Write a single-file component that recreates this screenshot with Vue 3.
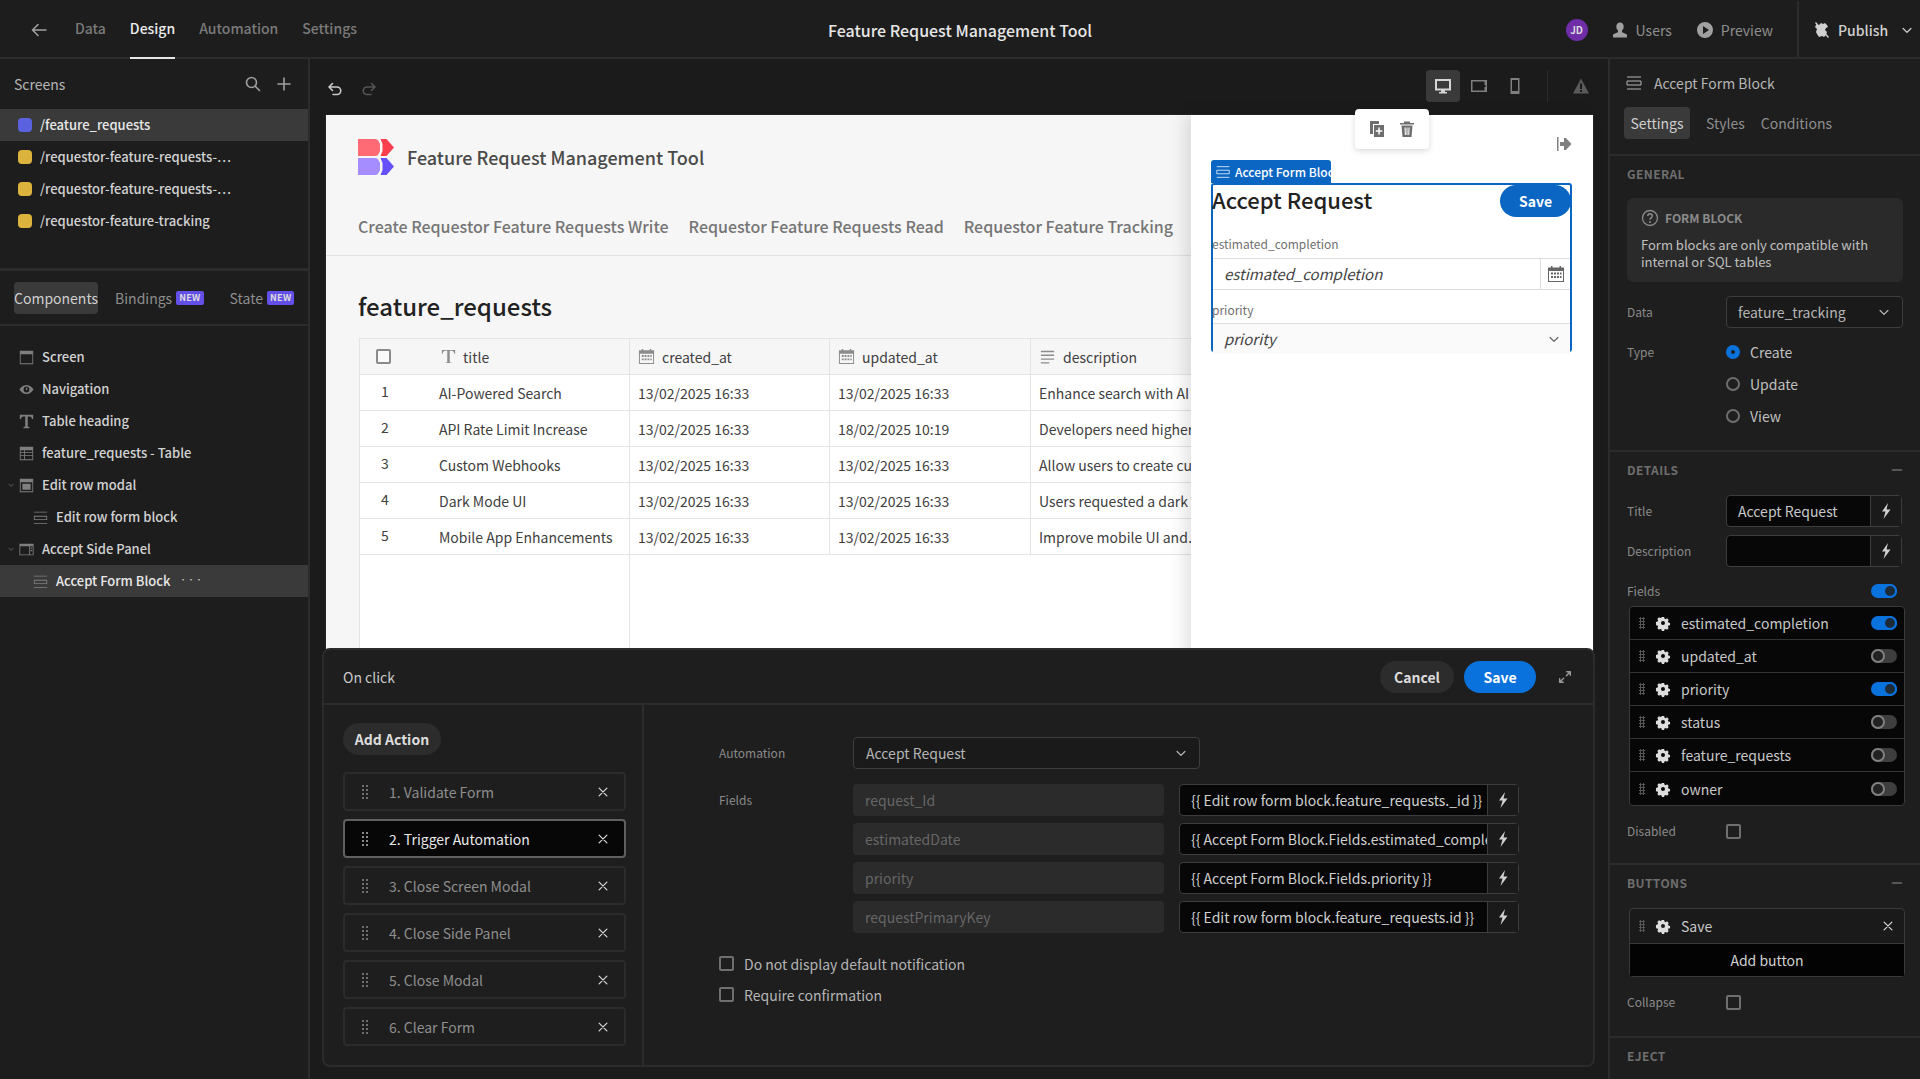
<script setup>
const ic = {
  back: 'M16 9H2.5M8 3.5L2.5 9 8 14.5',
  search: 'M7.5 2.5a5 5 0 1 0 0 10 5 5 0 0 0 0-10zM11.2 11.2L15.5 15.5',
  plus: 'M9 3v12M3 9h12',
  undo: 'M6.5 3.5L3 7l3.5 3.5M3.5 7H11a3.7 3.7 0 0 1 0 7.5H7',
  redo: 'M11.500 3.500L15 7l-3.500 3.500M14.500 7H7a3.700 3.700 0 0 0 0 7.500H11',
  close: 'M4 4l10 10M14 4L4 14',
  chev: 'M4 7l5 5 5-5',
  minus: 'M3 9h12',
  form: 'M2 3h14M2 7h14v4H2zM2 15h14',
  expand: 'M11 3h4v4M15 3l-4.500 4.500M7 15H3v-4M3 15l4.500-4.500'
}
const screens = [
  { t: '/feature_requests', c: '#5b62e0', active: true },
  { t: '/requestor-feature-requests-…', c: '#dcb33c' },
  { t: '/requestor-feature-requests-…', c: '#dcb33c' },
  { t: '/requestor-feature-tracking', c: '#dcb33c' }
]
const tree = [
  { t: 'Screen', i: 'screen' },
  { t: 'Navigation', i: 'nav' },
  { t: 'Table heading', i: 'text' },
  { t: 'feature_requests - Table', i: 'table' },
  { t: 'Edit row modal', i: 'modal', open: true },
  { t: 'Edit row form block', i: 'form', sub: true },
  { t: 'Accept Side Panel', i: 'side', open: true },
  { t: 'Accept Form Block', i: 'form', sub: true, active: true }
]
const rows = [
  ['1', 'AI-Powered Search', '13/02/2025 16:33', '13/02/2025 16:33', 'Enhance search with AI for better results across the app'],
  ['2', 'API Rate Limit Increase', '13/02/2025 16:33', '18/02/2025 10:19', 'Developers need higher rate limits for their apps'],
  ['3', 'Custom Webhooks', '13/02/2025 16:33', '13/02/2025 16:33', 'Allow users to create custom webhooks for events'],
  ['4', 'Dark Mode UI', '13/02/2025 16:33', '13/02/2025 16:33', 'Users requested a dark theme for the interface'],
  ['5', 'Mobile App Enhancements', '13/02/2025 16:33', '13/02/2025 16:33', 'Improve mobile UI and…']
]
const actions = ['1. Validate Form', '2. Trigger Automation', '3. Close Screen Modal', '4. Close Side Panel', '5. Close Modal', '6. Clear Form']
const params = [
  ['request_Id', '{{ Edit row form block.feature_requests._id }}'],
  ['estimatedDate', '{{ Accept Form Block.Fields.estimated_comple…'],
  ['priority', '{{ Accept Form Block.Fields.priority }}'],
  ['requestPrimaryKey', '{{ Edit row form block.feature_requests.id }}']
]
const fields = [
  ['estimated_completion', true], ['updated_at', false], ['priority', true],
  ['status', false], ['feature_requests', false], ['owner', false]
]
</script>

<template>
  <div class="app">
    <header class="topbar">
      <div class="top-left">
        <svg class="i18 back" viewBox="0 0 18 18"><path :d="ic.back" class="st" /></svg>
        <a class="tab">Data</a>
        <a class="tab on">Design</a>
        <a class="tab">Automation</a>
        <a class="tab">Settings</a>
      </div>
      <div class="app-title">Feature Request Management Tool</div>
      <div class="top-right">
        <span class="avatar">JD</span>
        <span class="top-act">
          <svg class="i18" viewBox="0 0 18 18"><path fill="currentColor" d="M9 1.500c2.300 0 3.700 1.800 3.700 4 0 1.800-.8 3.300-1.700 4.100v1.400c0 .5 3.600 1.500 5 2.500v3H2v-3c1.400-1 5-2 5-2.500V9.600C6.100 8.800 5.300 7.300 5.300 5.500c0-2.200 1.400-4 3.700-4z" /></svg>
          Users
        </span>
        <span class="top-act">
          <svg class="i18" viewBox="0 0 18 18"><path fill="currentColor" fill-rule="evenodd" d="M9 1a8 8 0 1 0 0 16A8 8 0 0 0 9 1zM7 5l6 4-6 4z" /></svg>
          Preview
        </span>
        <span class="publish">
          <svg class="i18" viewBox="0 0 18 18"><path fill="currentColor" d="M4 3l2 1 2-2 2 1 2-1 2 2 1 2-2 1-1 2 2 2-1 3-2 2-2-1-3 1-2-3-1-2 1-3-2-2 1-2zM3 1l13 15-1 1L2 2z" /></svg>
          Publish
          <svg class="i14" viewBox="0 0 18 18"><path :d="ic.chev" class="st" /></svg>
        </span>
      </div>
    </header>

    <div class="main">
      <aside class="sidebar">
        <div class="screens">
          <div class="sc-head">
            <span>Screens</span>
            <span class="sc-tools">
              <svg class="i18" viewBox="0 0 18 18"><path :d="ic.search" class="st" /></svg>
              <svg class="i18" viewBox="0 0 18 18"><path :d="ic.plus" class="st" /></svg>
            </span>
          </div>
          <div v-for="(s, n) in screens" :key="n" class="sc-row" :class="{ active: s.active }">
            <i class="dot" :style="{ background: s.c }"></i>{{ s.t }}
          </div>
        </div>
        <div class="left-tabs">
          <span class="ltab on">Components</span>
          <span class="ltab">Bindings<b class="new">NEW</b></span>
          <span class="ltab st-tab">State<b class="new">NEW</b></span>
        </div>
        <div class="tree">
          <div v-for="r in tree" :key="r.t" class="t-row" :class="{ sub: r.sub, active: r.active }">
            <svg v-if="r.open" class="t-chev" viewBox="0 0 18 18"><path :d="ic.chev" class="st" /></svg>
            <svg class="t-ic" viewBox="0 0 18 18" fill="#7f7f7f">
              <path v-if="r.i === 'screen'" fill-rule="evenodd" d="M1 1h16v16H1zM2 5v11h14V5z" />
              <path v-else-if="r.i === 'nav'" fill-rule="evenodd" d="M9 3.500c4 0 7 3 8.500 5.500-1.500 2.500-4.500 5.500-8.500 5.500S2 11.500.5 9C2 6.500 5 3.500 9 3.500zM9 5.500a3.500 3.500 0 1 0 0 7 3.500 3.500 0 0 0 0-7zM8.500 7H10v2.500H8.500z" />
              <path v-else-if="r.i === 'text'" d="M1 1h16v5h-1.500c0-2-1-3-3-3H10.500v12l2 .5V17h-7v-1.500l2-.5V3H5.500c-2 0-3 1-3 3H1z" />
              <path v-else-if="r.i === 'table'" fill-rule="evenodd" d="M1 1h16v16H1zM2 5v2.500h4V5zm5 0v2.500h9V5zM2 8.500V11h4V8.500zm5 0V11h9V8.500zM2 12v4h4v-4zm5 0v4h9v-4z" />
              <path v-else-if="r.i === 'modal'" fill-rule="evenodd" d="M1 1h16v16H1zM2 5v11h14V5zM4 7h10v7H4z" />
              <path v-else-if="r.i === 'side'" fill-rule="evenodd" d="M.5 2h17v14H.5zM1.500 5v10H12V5zM13 5v10h3.500V5zm.8 1.500h2v1.500h-2zm0 3h2V11h-2z" />
              <path v-else fill-rule="evenodd" d="M1 2h16v1H1zM1 7h16v5H1zm1 1v3h14V8zM1 15.500h16v1H1z" />
            </svg>
            <span>{{ r.t }}</span>
            <span v-if="r.active" class="more">•••</span>
          </div>
        </div>
      </aside>

      <section class="center">
        <div class="tools">
          <span class="undo">
            <svg class="i18" viewBox="0 0 18 18"><path :d="ic.undo" class="st" /></svg>
            <svg class="i18 dim" viewBox="0 0 18 18"><path :d="ic.redo" class="st" /></svg>
          </span>
          <span class="devices">
            <span class="dev on"><svg class="i18" viewBox="0 0 18 18"><path fill="currentColor" fill-rule="evenodd" d="M1 2h16v11.500H11V15h2v1.500H5V15h2v-1.500H1zM3 4v7.500h12V4z" /></svg></span>
            <span class="dev"><svg class="i18" viewBox="0 0 18 18"><path fill="currentColor" fill-rule="evenodd" d="M1 3h16v12H1zM2.500 4.500v9h12v-3.500h1.200V8h-1.200V4.500z" /></svg></span>
            <span class="dev"><svg class="i18" viewBox="0 0 18 18"><path fill="currentColor" fill-rule="evenodd" d="M4.500 1h9v16h-9zM6 3v11h6V3z" /></svg></span>
            <i class="vsep"></i>
            <svg class="i18 warn" viewBox="0 0 18 18"><path fill="#5a5a5a" fill-rule="evenodd" d="M9 1.500l8 15H1zM8 6.500v5.500h2V6.500zM8 13v2h2v-2z" /></svg>
          </span>
        </div>

        <div class="preview">
          <div class="page">
            <div class="pg-head">
              <svg class="logo" viewBox="0 0 36 36">
                <path fill="#ff6b74" d="M0 0h17c2 0 3 1 3.500 2l1.500 3v7l-1.500 3c-.5 1-1.500 2-3.500 2H0z" />
                <path fill="#fb3f4f" d="M22.500 0h6l7.500 8.500L28.500 17h-6l2-5V5z" />
                <path fill="#a58cff" d="M0 19h17c2 0 3 1 3.500 2l1.500 3v7l-1.500 3c-.5 1-1.500 2-3.500 2H0z" />
                <path fill="#6650fb" d="M22.500 19h6l7.500 8.500L28.500 36h-6l2-5v-7z" />
              </svg>
              <span class="pg-name">Feature Request Management Tool</span>
            </div>
            <nav class="pg-nav">
              <span>Create Requestor Feature Requests Write</span>
              <span>Requestor Feature Requests Read</span>
              <span>Requestor Feature Tracking</span>
              <span>Feature_requests</span>
            </nav>
            <div class="pg-body">
              <h2 class="pg-title">feature_requests</h2>
              <div class="tbl">
                <div class="th">
                  <div class="c0 first"><i class="cb light"></i><span class="h-t"><svg class="i18 th-ic" viewBox="0 0 18 18"><path fill="#8c8c8c" d="M2 2h14v4h-1c0-1.500-.8-3-2.500-3h-2.200v12l2 .5V16H5.700v-.5l2-.5V3H5.500C3.800 3 3 4.500 3 6H2z" /></svg>title</span></div>
                  <div class="c1"><svg class="i18 th-ic" viewBox="0 0 18 18"><path fill="#8c8c8c" fill-rule="evenodd" d="M1 2.500h3V1h1.500v1.500h7V1H14v1.500h3V17H1zM2 6v10h14V6zm2 1.500h2v2H4zm3 0h2v2H7zm3 0h2v2h-2zm3 0h1.500v2H13zM4 11h2v2H4zm3 0h2v2H7zm3 0h2v2h-2zm3 0h1.500v2H13z" /></svg>created_at</div>
                  <div class="c2"><svg class="i18 th-ic" viewBox="0 0 18 18"><path fill="#8c8c8c" fill-rule="evenodd" d="M1 2.500h3V1h1.500v1.500h7V1H14v1.500h3V17H1zM2 6v10h14V6zm2 1.500h2v2H4zm3 0h2v2H7zm3 0h2v2h-2zm3 0h1.500v2H13zM4 11h2v2H4zm3 0h2v2H7zm3 0h2v2h-2zm3 0h1.500v2H13z" /></svg>updated_at</div>
                  <div class="c3"><svg class="i18 th-ic" viewBox="0 0 18 18"><path fill="#8c8c8c" d="M2 3h14v1.500H2zM2 7h14v1.500H2zM2 11h14v1.500H2zM2 15h9v1.500H2z" /></svg>description</div>
                </div>
                <div v-for="r in rows" :key="r[0]" class="tr">
                  <div class="c0 first"><span class="num">{{ r[0] }}</span><span class="ttl">{{ r[1] }}</span></div>
                  <div class="c1">{{ r[2] }}</div>
                  <div class="c2">{{ r[3] }}</div>
                  <div class="c3">{{ r[4] }}</div>
                </div>
                <div class="tfill"><div class="first c0"></div></div>
              </div>
            </div>
          </div>

          <div class="side-panel">
            <svg class="i18 collapse" viewBox="0 0 18 18"><path fill="#808080" d="M2 2h1.500v14H2zM9 3h2l5.500 6-5.500 6H9v-4H5V7h4z" /></svg>
            <div class="fb">
              <span class="fb-tag"><svg class="i18" viewBox="0 0 18 18"><path fill="none" stroke="#fff" stroke-opacity=".85" :d="ic.form" /></svg>Accept Form Block</span>
              <div class="fb-head">
                <span class="fb-title">Accept Request</span>
                <span class="fb-save">Save</span>
              </div>
              <label class="fb-lbl">estimated_completion</label>
              <div class="fb-input">
                <em>estimated_completion</em>
                <span class="fb-cal"><svg class="i18" viewBox="0 0 18 18"><path fill="#666" fill-rule="evenodd" d="M1 2.500h3V1h1.500v1.500h7V1H14v1.500h3V17H1zM2 6v10h14V6zm2 1.500h2v2H4zm3 0h2v2H7zm3 0h2v2h-2zm3 0h1.500v2H13zM4 11h2v2H4zm3 0h2v2H7zm3 0h2v2h-2zm3 0h1.500v2H13z" /></svg></span>
              </div>
              <label class="fb-lbl second">priority</label>
              <div class="fb-input sel">
                <em>priority</em>
                <svg class="i14 fb-ch" viewBox="0 0 18 18"><path :d="ic.chev" class="st" /></svg>
              </div>
            </div>
          </div>

          <div class="float">
            <svg class="i18" viewBox="0 0 18 18"><path fill="#6e6e6e" d="M2 1h9v3H5v10H2zM6 5h10v12H6zM10.300 7.500v2.800H7.800v1.500h2.500v2.700h1.500v-2.700h2.500v-1.500h-2.500V7.500z" fill-rule="evenodd" /></svg>
            <svg class="i18" viewBox="0 0 18 18"><path fill="#6e6e6e" d="M6 1.500h6V3h4v1.500H2V3h4zM3.500 5.500h11L13.500 17h-9zM6.500 7.500l.4 7.500h1l-.3-7.500zm2 0V15h1V7.500zm2 0l-.3 7.500h1l.4-7.500z" fill-rule="evenodd" /></svg>
          </div>
        </div>

        <div class="action-panel">
          <div class="ap-head">
            <span>On click</span>
            <span class="ap-btns">
              <span class="btn cancel">Cancel</span>
              <span class="btn save">Save</span>
              <svg class="i14 exp" viewBox="0 0 18 18"><path :d="ic.expand" class="st" /></svg>
            </span>
          </div>
          <div class="ap-body">
            <div class="ap-left">
              <span class="add-action">Add Action</span>
              <div class="act-list">
                <div v-for="(a, n) in actions" :key="a" class="act" :class="{ sel: n === 1 }">
                  <i class="grip"></i>
                  <span class="act-t">{{ a }}</span>
                  <svg class="i14 x" viewBox="0 0 18 18"><path :d="ic.close" class="st" /></svg>
                </div>
              </div>
            </div>
            <div class="ap-right">
              <div class="auto-row">
                <span class="ar-lbl">Automation</span>
                <span class="auto-sel">Accept Request<svg class="i14" viewBox="0 0 18 18"><path :d="ic.chev" class="st" /></svg></span>
              </div>
              <div class="f-rows">
                <span class="ar-lbl f-lbl">Fields</span>
                <div class="f-col">
                  <div v-for="p in params" :key="p[0]" class="f-row">
                    <span class="f-name">{{ p[0] }}</span>
                    <span class="f-bind">
                      <span class="f-val">{{ p[1] }}</span>
                      <span class="bolt"><svg class="i18" viewBox="0 0 18 18"><path fill="#d0d0d0" d="M11 1L5 9.500h3.500L6.500 17l7-9.500H9.500z" /></svg></span>
                    </span>
                  </div>
                </div>
              </div>
              <label class="chk"><i class="cb"></i>Do not display default notification</label>
              <label class="chk"><i class="cb"></i>Require confirmation</label>
            </div>
          </div>
        </div>
      </section>

      <aside class="right">
        <div class="r-head">
          <div class="r-title">
            <svg class="i18" viewBox="0 0 18 18"><path fill="none" stroke="#b5b5b5" :d="ic.form" /></svg>
            Accept Form Block
          </div>
          <div class="r-tabs">
            <span class="rt on">Settings</span><span class="rt">Styles</span><span class="rt">Conditions</span>
          </div>
        </div>
        <div class="sect general">
          <div class="s-lbl">GENERAL</div>
          <div class="info">
            <div class="info-t">
              <svg class="i18" viewBox="0 0 18 18"><circle cx="9" cy="9" r="7.500" fill="none" stroke="#8a8a8a" stroke-width="1.300" /><path fill="none" stroke="#8a8a8a" stroke-width="1.500" d="M6.800 7c0-3 4.400-3 4.400 0 0 2-2.200 1.800-2.200 3.800" /><circle cx="9" cy="13" r="1" fill="#8a8a8a" /></svg>
              FORM BLOCK
            </div>
            <div class="info-b">Form blocks are only compatible with internal or SQL tables</div>
          </div>
          <div class="prop">
            <span class="p-lbl">Data</span>
            <span class="r-sel">feature_tracking<svg class="i14" viewBox="0 0 18 18"><path :d="ic.chev" class="st" /></svg></span>
          </div>
          <div class="prop radio-p">
            <span class="p-lbl">Type</span>
            <span class="radio"><i class="rd on"></i>Create</span>
          </div>
          <div class="prop radio-p"><span class="p-lbl"></span><span class="radio"><i class="rd"></i>Update</span></div>
          <div class="prop radio-p"><span class="p-lbl"></span><span class="radio"><i class="rd"></i>View</span></div>
        </div>
        <div class="sect details">
          <div class="s-lbl row"><span>DETAILS</span><svg class="i14 min" viewBox="0 0 18 18"><path :d="ic.minus" class="st" /></svg></div>
          <div class="prop">
            <span class="p-lbl">Title</span>
            <span class="r-inp"><span class="r-val">Accept Request</span><span class="bolt r"><svg class="i18" viewBox="0 0 18 18"><path fill="#d0d0d0" d="M11 1L5 9.500h3.500L6.500 17l7-9.500H9.500z" /></svg></span></span>
          </div>
          <div class="prop">
            <span class="p-lbl">Description</span>
            <span class="r-inp"><span class="r-val"></span><span class="bolt r"><svg class="i18" viewBox="0 0 18 18"><path fill="#d0d0d0" d="M11 1L5 9.500h3.500L6.500 17l7-9.500H9.500z" /></svg></span></span>
          </div>
          <div class="fields-h"><span class="p-lbl">Fields</span><i class="tog on"></i></div>
          <div class="f-list">
            <div v-for="f in fields" :key="f[0]" class="fl-row">
              <i class="grip small"></i>
              <svg class="i18 gear" viewBox="0 0 18 18"><path fill="#ddd" fill-rule="evenodd" d="M7.600 1.500h2.800l.4 2 1.500.7 1.800-1 2 2-1 1.800.7 1.500 2 .4v2.800l-2 .4-.7 1.500 1 1.800-2 2-1.800-1-1.500.7-.4 2H7.600l-.4-2-1.500-.7-1.800 1-2-2 1-1.800-.7-1.500-2-.4V7.600l2-.4.700-1.500-1-1.800 2-2 1.800 1 1.500-.7zM9 6.500a2.500 2.500 0 1 0 0 5 2.500 2.500 0 0 0 0-5z" transform="translate(1.800 1.800) scale(.8)" /></svg>
              <span class="fl-t">{{ f[0] }}</span>
              <i class="tog" :class="{ on: f[1] }"></i>
            </div>
          </div>
          <div class="prop chk-p"><span class="p-lbl">Disabled</span><i class="cb"></i></div>
        </div>
        <div class="sect buttons">
          <div class="s-lbl row"><span>BUTTONS</span><svg class="i14 min" viewBox="0 0 18 18"><path :d="ic.minus" class="st" /></svg></div>
          <div class="f-list">
            <div class="fl-row save-row">
              <i class="grip small"></i>
              <svg class="i18 gear" viewBox="0 0 18 18"><path fill="#ddd" fill-rule="evenodd" d="M7.600 1.500h2.800l.4 2 1.500.7 1.800-1 2 2-1 1.800.7 1.500 2 .4v2.800l-2 .4-.7 1.500 1 1.800-2 2-1.800-1-1.500.7-.4 2H7.600l-.4-2-1.500-.7-1.800 1-2-2 1-1.800-.7-1.500-2-.4V7.600l2-.4.700-1.500-1-1.800 2-2 1.800 1 1.500-.7zM9 6.500a2.500 2.500 0 1 0 0 5 2.500 2.500 0 0 0 0-5z" transform="translate(1.800 1.800) scale(.8)" /></svg>
              <span class="fl-t">Save</span>
              <svg class="i14 x2" viewBox="0 0 18 18"><path :d="ic.close" class="st" /></svg>
            </div>
            <div class="add-btn">Add button</div>
          </div>
          <div class="prop chk-p"><span class="p-lbl">Collapse</span><i class="cb"></i></div>
        </div>
        <div class="sect eject"><div class="s-lbl">EJECT</div></div>
      </aside>
    </div>
  </div>
</template>

<style>
html, body { margin: 0; background: #1a1a1a; }
</style>

<style scoped>
.app {
  width: 1920px; height: 1079px; overflow: hidden; display: flex; flex-direction: column;
  background: #1b1b1b; color: #c8c8c8;
  font-family: "Noto Sans CJK SC", "Noto Sans", sans-serif; font-size: 14px; line-height: 18px;
}
.st { fill: none; stroke: currentColor; stroke-width: 1.600; stroke-linecap: round; stroke-linejoin: round; }
.i18 { width: 18px; height: 18px; flex: none; display: block; }
.i14 { width: 14px; height: 14px; flex: none; display: block; }

.topbar {
  height: 57px; flex: none; border-bottom: 2px solid #2c2c2c; background: #1d1d1d;
  display: grid; grid-template-columns: 1fr auto 1fr; align-items: center;
}
.top-left { display: flex; align-items: center; padding-left: 30px; color: #8e8e8e; height: 59px; }
.back { color: #a0a0a0; margin-right: 27px; }
.tab { font-weight: 500; color: #7a7a7a; height: 57px; line-height: 57px; margin-right: 24px; border-bottom: 2px solid transparent; box-sizing: content-box; }
.tab.on { color: #ececec; border-bottom-color: #e6e6e6; }
.app-title { font-size: 16px; font-weight: 500; color: #e6e6e6; }
.top-right { display: flex; align-items: center; justify-content: flex-end; height: 57px; }
.avatar { width: 22px; height: 22px; border-radius: 50%; background: #6f2da8; color: #ddd; font-size: 10px; font-weight: 700; display: flex; align-items: center; justify-content: center; margin-right: 23px; }
.top-act { display: flex; align-items: center; gap: 7px; color: #8e8e8e; margin-right: 24px; }
.top-act svg { color: #a0a0a0; }
.publish { display: flex; align-items: center; gap: 7px; height: 57px; padding: 0 16px 0 14px; border-left: 2px solid #2c2c2c; color: #d0d0d0; font-weight: 500; width: 123px; box-sizing: border-box; }
.publish .i14 { margin-left: 5px; }

.main { flex: 1; display: flex; min-height: 0; }

.sidebar { width: 308px; flex: none; border-right: 2px solid #2c2c2c; background: #1d1d1d; }
.screens { height: 209px; border-bottom: 3px solid #2c2c2c; box-sizing: content-box; }
.sc-head { display: flex; justify-content: space-between; align-items: center; height: 50px; padding: 0 15px 0 14px; color: #b5b5b5; }
.sc-tools { display: flex; gap: 13px; color: #a0a0a0; }
.sc-row { height: 32px; display: flex; align-items: center; padding-left: 18px; font-size: 13px; font-weight: 500; color: #d2d2d2; }
.sc-row.active { background: #3a3a3a; color: #e8e8e8; }
.dot { width: 14px; height: 14px; border-radius: 4px; margin-right: 8px; flex: none; }
.left-tabs { height: 53px; border-bottom: 2px solid #2c2c2c; display: flex; align-items: center; padding-left: 14px; color: #8e8e8e; }
.ltab { height: 32px; display: flex; align-items: center; padding: 0 9px; border-radius: 4px; margin-right: 8px; }
.ltab.on { background: #3a3a3a; color: #cfcfcf; width: 93px; box-sizing: border-box; padding: 0; justify-content: center; margin-right: 8px; }
.st-tab { margin-left: 0; }
.new { background: #6350e8; color: #ddd; font-size: 9px; font-weight: 700; letter-spacing: .3px; line-height: 14px; padding: 0 3px; border-radius: 2px; margin-left: 4px; }
.tree { padding-top: 15px; }
.t-row { height: 32px; display: flex; align-items: center; padding-left: 19px; font-size: 13px; font-weight: 500; color: #d2d2d2; position: relative; }
.t-row.sub { padding-left: 33px; }
.t-row.active { background: #3a3a3a; color: #e8e8e8; }
.t-ic { width: 15px; height: 15px; flex: none; margin-right: 8px; }
.t-chev { position: absolute; left: 7px; top: 12px; width: 8px; height: 8px; color: #777; }
.more { font-size: 7px; letter-spacing: 1px; margin-left: 9px; color: #ccc; margin-top: -4px; }

.center { flex: 1; position: relative; min-width: 0; background: #1b1b1b; }
.tools { height: 56px; display: flex; align-items: center; justify-content: space-between; padding: 0 18px 0 16px; }
.undo { display: flex; gap: 16px; color: #c8c8c8; padding-top: 3px; }
.undo .dim { color: #555; }
.devices { display: flex; align-items: center; gap: 2px; color: #7f7f7f; margin-top: -3px; }
.dev { width: 34px; height: 32px; display: flex; align-items: center; justify-content: center; border-radius: 4px; }
.dev.on { background: #3a3a3a; color: #d5d5d5; }
.vsep { width: 1px; height: 32px; background: #2c2c2c; margin: 0 22px 0 13px; }
.warn { margin-right: 0; }

.preview { position: relative; margin-left: 16px; width: 1267px; height: 545px; background: #f6f6f6; box-shadow: 0 0 0 1px #252525; overflow: visible; }
.page { width: 100%; height: 100%; overflow: hidden; color: #404040; }
.pg-head { height: 84px; padding-left: 32px; display: flex; align-items: center; gap: 13px; padding-top: 0; box-sizing: border-box; }
.logo { width: 36px; height: 36px; }
.pg-name { font-size: 18px; font-weight: 500; color: #4a4a4a; }
.pg-nav { height: 56px; border-bottom: 1px solid #e2e2e2; display: flex; gap: 20px; padding-left: 32px; align-items: flex-start; padding-top: 18px; box-sizing: content-box; height: 38px; font-size: 16px; font-weight: 500; color: #757575; white-space: nowrap; }
.pg-body { padding: 0 0 0 33px; }
.pg-title { margin: 34px 0 0 -1px; height: 32px; font-size: 24px; line-height: 32px; font-weight: 500; color: #222; }
.tbl { margin-top: 16px; width: 1200px; border-top: 1px solid #e4e4e4; font-size: 14px; }
.th, .tr { display: flex; height: 35px; border-bottom: 1px solid #e4e4e4; background: #fff; }
.th { background: #f6f6f6; }
.c0 { width: 271px; display: flex; align-items: center; flex: none; box-sizing: border-box; }
.first { border-left: 1px solid #e4e4e4; border-right: 1px solid #e4e4e4; }
.c1, .c2, .c3 { display: flex; align-items: center; flex: none; white-space: nowrap; box-sizing: border-box; padding-left: 8px; border-right: 1px solid #e4e4e4; }
.c1 { width: 200px; }
.c2 { width: 201px; }
.c3 { width: 528px; border-right: 0; }
.th-ic { width: 17px; height: 17px; margin-right: 7px; }
.cb { width: 14px; height: 14px; flex: none; display: block; border: 2px solid #6f6f6f; border-radius: 2px; box-sizing: content-box; width: 11px; height: 11px; }
.cb.light { border-color: #8a8a8a; margin-left: 16px; margin-right: 49px; width: 11px; height: 11px; background: #fafafa; }
.h-t { display: flex; align-items: center; }
.h-t .th-ic { margin-right: 6px; }
.num { width: 79px; padding-left: 21px; box-sizing: border-box; margin-top: -4px; flex: none; }
.tfill { height: 300px; background: #fff; display: flex; }
.tfill .c0 { height: 100%; border-top: 0; }

.side-panel { position: absolute; top: 0; right: 0; width: 402px; height: 100%; background: #fff; box-shadow: -6px 0 16px rgba(0, 0, 0, .12); box-sizing: border-box; padding: 68px 20px 0 20px; }
.collapse { position: absolute; top: 20px; right: 20px; }
.fb { position: relative; border: 2px solid #0a66c2; border-radius: 3px; height: 169px; box-sizing: border-box; width: 361px; }
.fb-tag { position: absolute; top: -25px; left: -2px; width: 120px; height: 23px; background: #0a66c2; color: #fff; border-radius: 3px 3px 0 0; display: flex; align-items: center; padding-left: 4px; box-sizing: border-box; font-size: 12px; font-weight: 500; gap: 4px; white-space: nowrap; }
.fb-tag svg { width: 16px; height: 16px; }
.fb-head { display: flex; justify-content: space-between; align-items: flex-start; height: 40px; }
.fb-title { font-size: 22px; line-height: 28px; font-weight: 500; color: #222; margin-left: -1px; }
.fb-save { width: 71px; height: 32px; border-radius: 16px; background: #0a66c2; color: #fff; font-weight: 700; font-size: 14px; display: flex; align-items: center; justify-content: center; margin-right: -1px; }
.fb-lbl { display: block; font-size: 12px; line-height: 16px; color: #707070; margin: 11px 0 0 -1px; height: 16px; }
.fb-lbl.second { margin-top: 12px; }
.fb-input { height: 31px; margin-top: 6px; border-top: 1px solid #ddd; border-bottom: 1px solid #ddd; display: flex; align-items: center; padding-left: 11px; font-size: 15px; color: #444; box-sizing: border-box; height: 32px; }
.fb-input em { flex: 1; }
.fb-input.sel { background: #fafafa; border-bottom: 0; margin-top: 5px; height: 31px; }
.fb-cal { width: 29px; height: 100%; display: flex; align-items: center; justify-content: center; border-left: 1px solid #ddd; }
.fb-ch { color: #666; margin-right: 9px; }
.float { position: absolute; top: -6px; left: 1029px; width: 74px; height: 40px; background: #fff; border-radius: 4px; box-shadow: 0 2px 6px rgba(0, 0, 0, .15); display: flex; align-items: center; justify-content: center; gap: 12px; }

.action-panel { position: absolute; left: 12px; top: 589px; width: 1273px; height: 419px; box-sizing: border-box; border: 2px solid #2b2b2b; border-radius: 8px; background: #1e1e1e; display: flex; flex-direction: column; }
.ap-head { height: 53px; flex: none; border-bottom: 2px solid #2c2c2c; display: flex; align-items: center; justify-content: space-between; padding: 0 0 0 19px; color: #c8c8c8; }
.ap-btns { display: flex; align-items: center; }
.btn { height: 32px; border-radius: 16px; display: flex; align-items: center; justify-content: center; font-weight: 700; }
.cancel { width: 74px; background: #2c2c2c; color: #ddd; margin-right: 10px; }
.save { width: 72px; background: #0a72dc; color: #fff; margin-right: 21px; }
.exp { color: #999; margin-right: 20px; width: 16px; height: 16px; }
.ap-body { flex: 1; display: flex; min-height: 0; }
.ap-left { width: 320px; flex: none; box-sizing: border-box; border-right: 2px solid #2c2c2c; padding: 18px 0 0 19px; }
.add-action { width: 98px; height: 32px; border-radius: 16px; background: #2c2c2c; color: #ddd; font-weight: 700; display: flex; align-items: center; justify-content: center; }
.act-list { margin-top: 17px; display: flex; flex-direction: column; gap: 8px; }
.act { width: 283px; height: 39px; box-sizing: border-box; border: 2px solid #2b2b2b; border-radius: 4px; display: flex; align-items: center; color: #8e8e8e; }
.act.sel { background: #070707; border-color: #606060; color: #e8e8e8; }
.grip { width: 8px; height: 16px; flex: none; margin-left: 16px; background-image: radial-gradient(circle, #6f6f6f 1px, transparent 1.2px); background-size: 4px 4px; }
.act.sel .grip { background-image: radial-gradient(circle, #888 1px, transparent 1.2px); }
.act-t { margin-left: 20px; flex: 1; }
.x { margin-right: 14px; color: #d8d8d8; }
.ap-right { flex: 1; padding: 32px 0 0 75px; }
.auto-row { display: flex; align-items: center; height: 32px; }
.ar-lbl { width: 134px; flex: none; font-size: 12px; color: #8a8a8a; }
.auto-sel { width: 347px; height: 32px; box-sizing: border-box; border: 1px solid #3d3d3d; border-radius: 4px; background: #1a1a1a; display: flex; align-items: center; justify-content: space-between; padding: 0 11px 0 12px; color: #b5b5b5; }
.f-rows { display: flex; margin-top: 15px; }
.f-lbl { line-height: 32px; }
.f-col { display: flex; flex-direction: column; gap: 7px; }
.f-row { display: flex; gap: 15px; height: 32px; }
.f-name { width: 311px; height: 32px; background: #2b2b2b; border-radius: 4px; color: #666; padding-left: 12px; box-sizing: border-box; line-height: 32px; }
.f-bind { width: 340px; height: 32px; box-sizing: border-box; border: 1px solid #3d3d3d; border-radius: 4px; background: #070707; display: flex; color: #d0d0d0; }
.f-val { flex: 1; padding-left: 11px; line-height: 30px; white-space: nowrap; overflow: hidden; font-size: 14px; }
.bolt { width: 30px; flex: none; border-left: 1px solid #3d3d3d; background: #1a1a1a; display: flex; align-items: center; justify-content: center; }
.bolt.r { background: #1a1a1a; }
.chk { display: flex; align-items: center; gap: 10px; height: 31px; color: #b5b5b5; }
.f-rows + .chk { margin-top: 15px; }

.right { width: 312px; flex: none; border-left: 2px solid #2c2c2c; box-sizing: border-box; background: #1e1e1e; }
.r-head { height: 95px; border-bottom: 2px solid #2c2c2c; box-sizing: content-box; padding: 0 0 0 0; }
.r-title { height: 48px; display: flex; align-items: center; gap: 11px; padding-left: 15px; color: #b5b5b5; }
.r-tabs { display: flex; padding-left: 14px; color: #8e8e8e; }
.rt { height: 32px; line-height: 32px; margin-right: 16px; }
.rt.on { width: 66px; text-align: center; background: #3a3a3a; border-radius: 4px; color: #cfcfcf; }
.sect { border-bottom: 2px solid #2c2c2c; padding: 10px 17px 0 17px; box-sizing: content-box; }
.general { height: 284px; }
.details { height: 401px; }
.buttons { height: 161px; }
.eject { border-bottom: 0; }
.s-lbl { font-size: 12px; line-height: 16px; font-weight: 700; color: #6e6e6e; letter-spacing: .4px; }
.s-lbl.row { display: flex; justify-content: space-between; align-items: center; }
.min { color: #8e8e8e; margin-right: -1px; }
.info { margin-top: 16px; height: 84px; box-sizing: border-box; background: #2a2a2a; border-radius: 6px; padding: 11px 14px; }
.info-t { display: flex; align-items: center; gap: 6px; font-size: 12px; font-weight: 700; color: #8a8a8a; height: 18px; }
.info-b { margin-top: 9px; font-size: 13px; line-height: 17px; color: #c0c0c0; }
.prop { display: flex; align-items: center; height: 32px; margin-bottom: 8px; }
.general .prop:nth-of-type(3) { margin-top: 14px; }
.radio-p { margin-bottom: 0; }
.general .radio-p:nth-of-type(4) { margin-top: 8px; }
.p-lbl { width: 99px; flex: none; font-size: 12px; color: #8a8a8a; }
.r-sel { flex: 1; height: 32px; box-sizing: border-box; border: 1px solid #3d3d3d; border-radius: 4px; background: #1a1a1a; display: flex; align-items: center; justify-content: space-between; padding: 0 11px 0 11px; color: #b5b5b5; }
.radio { display: flex; align-items: center; gap: 10px; color: #c0c0c0; }
.rd { width: 10px; height: 10px; border: 2px solid #6e6e6e; border-radius: 50%; box-sizing: content-box; }
.rd.on { border: 5px solid #0a72dc; width: 4px; height: 4px; background: #1e1e1e; }
.details .prop:nth-of-type(2) { margin-top: 17px; }
.r-inp { width: 176px; height: 32px; box-sizing: border-box; border: 1px solid #3d3d3d; border-radius: 4px; background: #070707; display: flex; color: #c8c8c8; }
.r-val { flex: 1; padding-left: 11px; line-height: 30px; }
.fields-h { display: flex; align-items: center; justify-content: space-between; height: 16px; margin: 16px 0 0; padding-right: 6px; }
.f-list { margin: 7px -2px 0 2px; border: 1px solid #3a3a3a; border-radius: 4px; background: #070707; width: 276px; box-sizing: border-box; }
.fl-row { height: 33px; display: flex; align-items: center; border-bottom: 1px solid #333; box-sizing: border-box; color: #c8c8c8; }
.fl-row:last-child { border-bottom: 0; }
.grip.small { width: 6px; height: 12px; margin-left: 9px; background-image: radial-gradient(circle, #555 1px, transparent 1.2px); background-size: 3px 3px; }
.gear { margin-left: 9px; margin-right: 9px; }
.fl-t { flex: 1; }
.tog { display: block; width: 26px; height: 14px; border-radius: 7px; background: #3e3e3e; position: relative; flex: none; margin-right: 7px; }
.tog::after { content: ""; position: absolute; left: 0; top: 0; width: 10px; height: 10px; border-radius: 50%; border: 2px solid #808080; background: #222; }
.tog.on { background: #0a72dc; }
.tog.on::after { left: 12px; border-color: #0a72dc; background: #1d2a38; }
.fields-h .tog { margin-right: 0; }
.chk-p { margin: 9px 0 0; height: 32px; }
.buttons .f-list { margin-top: 17px; background: #1a1a1a; }
.save-row { height: 35px; border-bottom: 1px solid #3a3a3a; }
.add-btn { height: 32px; background: #030303; text-align: center; line-height: 32px; color: #d0d0d0; }
.x2 { color: #d8d8d8; margin-right: 9px; }
</style>
